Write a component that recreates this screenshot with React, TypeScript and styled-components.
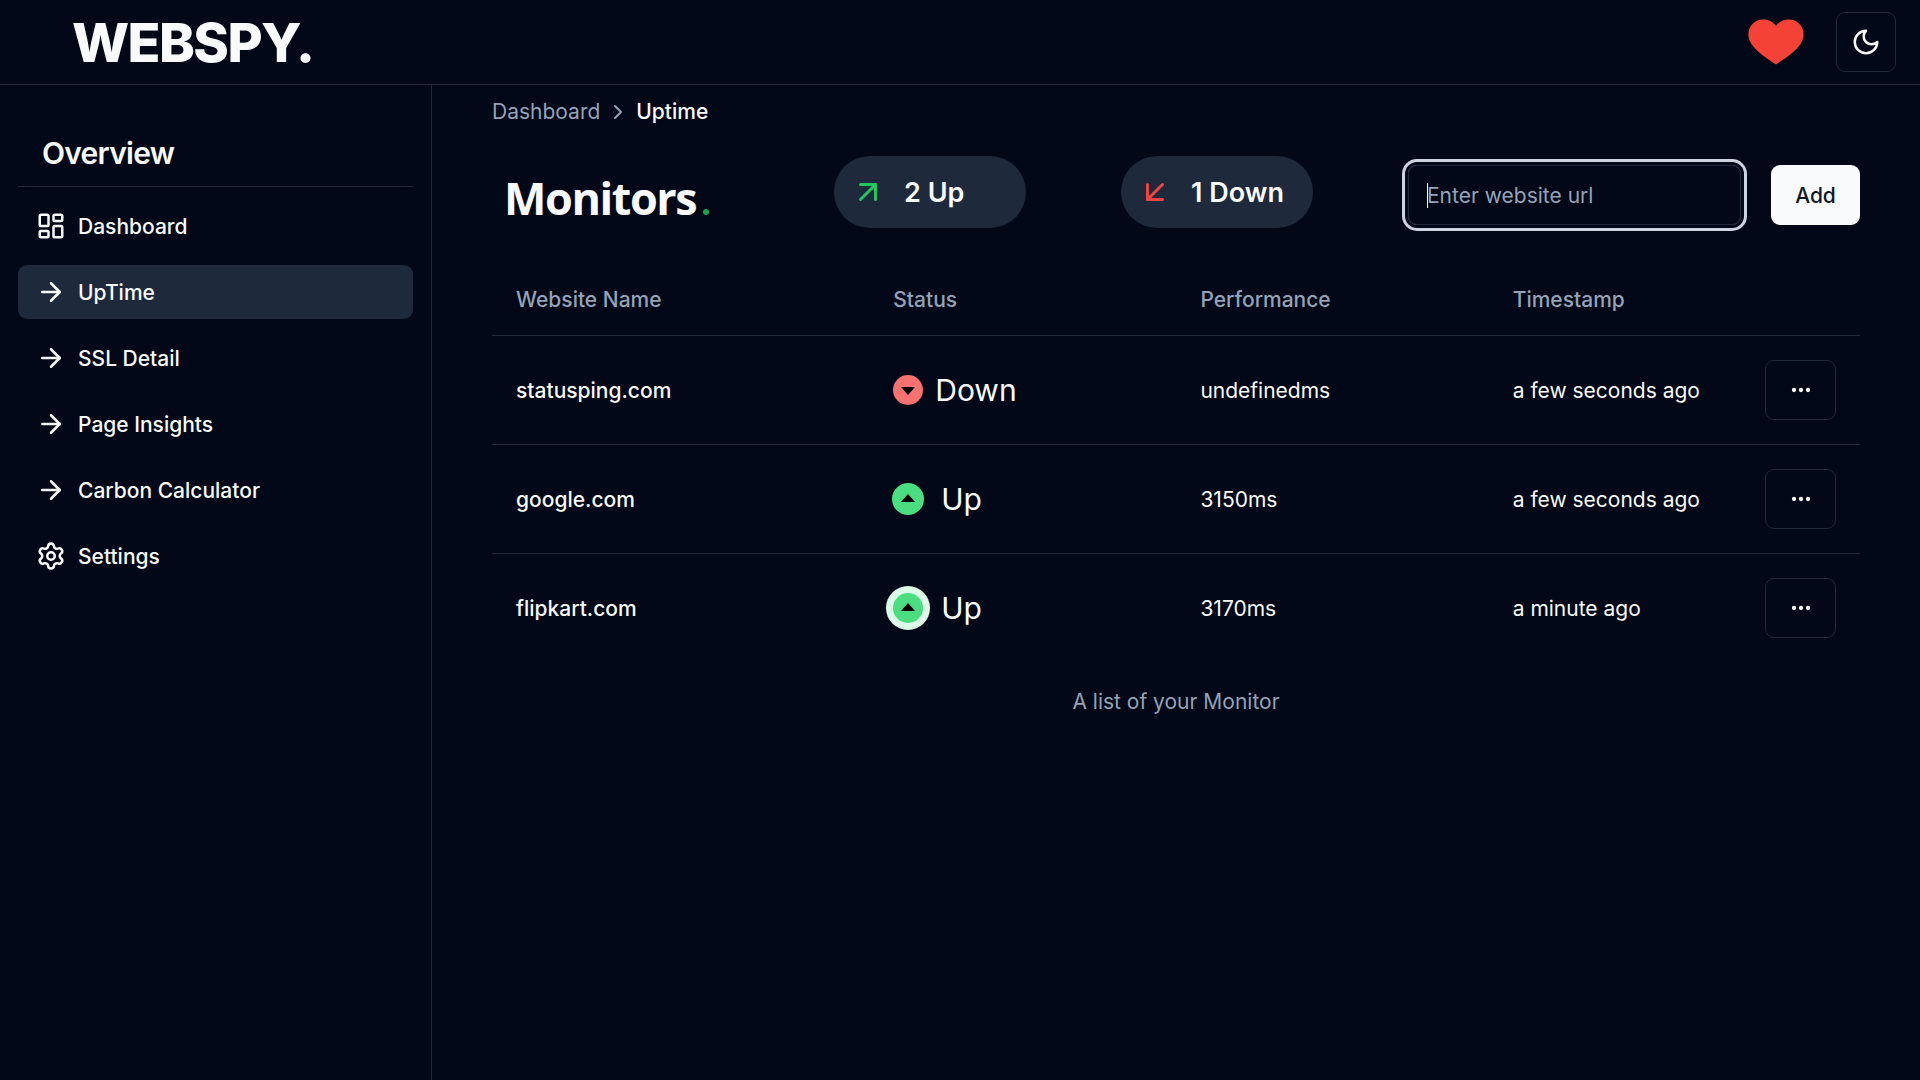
import React from "react";
import styled, { createGlobalStyle } from "styled-components";
import {
  ArrowDownLeft,
  ArrowRight,
  ArrowUpRight,
  ChevronRight,
  LayoutDashboard,
  MoreHorizontal,
  Settings,
} from "lucide-react";

const c = {
  bg: "#020817",
  fg: "#f8fafc",
  border: "#1e293b",
  muted: "#94a3b8",
};

const GlobalStyle = createGlobalStyle`
  * { box-sizing: border-box; }
  html, body { margin: 0; background: ${c.bg}; }
  body {
    color: ${c.fg};
    font-family: Inter, "Liberation Sans", sans-serif;
    font-size: 21px;
    line-height: 30px;
  }
  button { font: inherit; }
`;

const Page = styled.div`
  display: flex;
  flex-direction: column;
  height: 100vh;
  overflow: hidden;
`;

const Header = styled.header`
  display: flex;
  align-items: center;
  justify-content: space-between;
  height: 85px;
  flex: none;
  padding: 0 24px 0 72px;
  border-bottom: 1px solid ${c.border};
`;

const Logo = styled.h1`
  margin: 0;
  padding-top: 2px;
  font-size: 54px;
  line-height: 60px;
  font-weight: 800;
  letter-spacing: -1.55px;
`;

const HeaderActions = styled.div`
  display: flex;
  align-items: center;
  gap: 32px;
`;

const Heart = styled.svg`
  width: 56px;
  height: 46px;
  display: block;
`;

const IconButton = styled.button<{ $width?: number }>`
  display: flex;
  align-items: center;
  justify-content: center;
  width: ${(p) => p.$width ?? 60}px;
  height: 60px;
  padding: 0;
  border: 1px solid ${c.border};
  border-radius: 9px;
  background: transparent;
  color: ${c.fg};
`;

const Body = styled.div`
  display: flex;
  flex: 1;
  min-height: 0;
`;

const Sidebar = styled.aside`
  width: 432px;
  flex: none;
  padding: 48px 18px 0;
  border-right: 1px solid ${c.border};
`;

const SidebarTitle = styled.h2`
  margin: 0;
  padding: 0 24px 13px;
  height: 54px;
  border-bottom: 1px solid ${c.border};
  font-size: 30px;
  line-height: 40px;
  font-weight: 600;
  letter-spacing: -0.025em;
`;

const Nav = styled.nav`
  display: flex;
  flex-direction: column;
  gap: 12px;
  padding-top: 12px;
`;

const NavItem = styled.a<{ $active?: boolean }>`
  display: flex;
  align-items: center;
  gap: 12px;
  height: 54px;
  padding: 0 18px;
  border-radius: 9px;
  font-weight: 500;
  background: ${(p) => (p.$active ? c.border : "transparent")};
`;

const Label = styled.span`
  padding-top: 2px;
`;

const Main = styled.main`
  flex: 1;
  min-width: 0;
  padding: 12px 60px 0;
`;

const Breadcrumb = styled.nav`
  display: flex;
  align-items: center;
  height: 30px;
  color: ${c.muted};
  svg { margin: 0 6px; }
`;

const Current = styled.span`
  color: ${c.fg};
  font-weight: 500;
`;

const Toolbar = styled.div`
  display: flex;
  height: 72px;
  margin-top: 29px;
`;

const Title = styled.h2`
  display: flex;
  align-items: baseline;
  width: 342px;
  margin: 0;
  padding: 15px 0 0 12px;
  font-family: "Open Sans", "Noto Sans", sans-serif;
  font-size: 45px;
  line-height: 54px;
  font-weight: 700;
  letter-spacing: -1.45px;
`;

const TitleDot = styled.span`
  width: 6px;
  height: 6px;
  margin: 0 0 -2px 7px;
  border-radius: 50%;
  background: #16a34a;
`;

const Pill = styled.div<{ $tone: string }>`
  display: flex;
  align-items: center;
  gap: 18px;
  width: 192px;
  margin-right: 95px;
  padding-left: 16px;
  border-radius: 36px;
  background: ${c.border};
  font-size: 27px;
  font-weight: 600;
  svg { color: ${(p) => p.$tone}; }
`;

const Field = styled.div`
  display: flex;
  align-items: center;
  width: 333px;
  height: 60px;
  margin: 9px 30px 0 0;
  padding: 0 18px;
  border: 1px solid ${c.border};
  border-radius: 9px;
  box-shadow: 0 0 0 3px ${c.bg}, 0 0 0 6px #cbd5e1;
  color: ${c.muted};
`;

const Caret = styled.span`
  width: 1px;
  height: 25px;
  margin-right: -1px;
  background: #fff;
`;

const AddButton = styled.button`
  width: 89px;
  height: 60px;
  margin-top: 9px;
  padding: 2px 0 0;
  border: 0;
  border-radius: 9px;
  background: ${c.fg};
  color: #0f172a;
  font-weight: 500;
`;

const Table = styled.div`
  margin-top: 35px;
`;

const Row = styled.div<{ $head?: boolean }>`
  display: grid;
  grid-template-columns: 377.25px 307.15px 312.3px 1fr 95px;
  align-items: center;
  height: ${(p) => (p.$head ? 73 : 109)}px;
  border-bottom: 1px solid ${c.border};
  color: ${(p) => (p.$head ? c.muted : c.fg)};
  font-weight: ${(p) => (p.$head ? 500 : 400)};
  &:last-child { border-bottom-color: transparent; }
`;

const Cell = styled.div<{ $strong?: boolean }>`
  padding: 2px 0 0 24px;
  white-space: nowrap;
  font-weight: ${(p) => (p.$strong ? 500 : "inherit")};
`;

const Status = styled.div<{ $gap: number }>`
  display: flex;
  align-items: center;
  gap: ${(p) => p.$gap}px;
  margin-top: -2px;
  font-size: 30px;
  line-height: 42px;
`;

const StatusMark = styled.span<{ $up: boolean; $halo: number; $haloColor: string }>`
  display: flex;
  align-items: center;
  justify-content: center;
  width: 30px;
  height: 30px;
  padding: ${(p) => (p.$up ? "0 0 2px" : "2px 0 0")};
  border-radius: 50%;
  background: ${(p) => (p.$up ? "#4ade80" : "#f87171")};
  box-shadow: 0 0 0 ${(p) => p.$halo}px ${(p) => p.$haloColor};
`;

const Caption = styled.p`
  margin: 24px 0 0;
  text-align: center;
  color: ${c.muted};
`;

const navItems = [
  { label: "Dashboard", icon: LayoutDashboard },
  { label: "UpTime", icon: ArrowRight, active: true },
  { label: "SSL Detail", icon: ArrowRight },
  { label: "Page Insights", icon: ArrowRight },
  { label: "Carbon Calculator", icon: ArrowRight },
  { label: "Settings", icon: Settings },
];

const monitors = [
  { name: "statusping.com", up: false, halo: 0, haloColor: "transparent", perf: "undefinedms", time: "a few seconds ago" },
  { name: "google.com", up: true, halo: 1, haloColor: "#4ade80", perf: "3150ms", time: "a few seconds ago" },
  { name: "flipkart.com", up: true, halo: 7, haloColor: "#dcfce7", perf: "3170ms", time: "a minute ago" },
];

export default function App() {
  return (
    <Page>
      <GlobalStyle />
      <Header>
        <Logo>WEBSPY.</Logo>
        <HeaderActions>
          <Heart viewBox="0 0 56 46">
            <path
              d="M28 45.6C18 38.500 0.400 28.500 0.400 15.500C0.400 6.500 7 0.400 15 0.400C21 0.400 25.500 3 28 7C30.500 3 35 0.400 41 0.400C49 0.400 55.600 6.500 55.600 15.500C55.600 28.500 38 38.500 28 45.600Z"
              fill="#f44336"
            />
          </Heart>
          <IconButton aria-label="Toggle theme">
            <svg
              width="30"
              height="30"
              viewBox="0 0 24 24"
              fill="none"
              stroke="currentColor"
              strokeWidth="2"
              strokeLinecap="round"
              strokeLinejoin="round"
            >
              <path d="M12 3a6 6 0 0 0 9 9 9 9 0 1 1-9-9Z" />
            </svg>
          </IconButton>
        </HeaderActions>
      </Header>
      <Body>
        <Sidebar>
          <SidebarTitle>Overview</SidebarTitle>
          <Nav>
            {navItems.map(({ label, icon: Icon, active }) => (
              <NavItem key={label} $active={active}>
                <Icon size={30} />
                <Label>{label}</Label>
              </NavItem>
            ))}
          </Nav>
        </Sidebar>
        <Main>
          <Breadcrumb>
            Dashboard
            <ChevronRight size={24} />
            <Current>Uptime</Current>
          </Breadcrumb>
          <Toolbar>
            <Title>
              Monitors
              <TitleDot />
            </Title>
            <Pill $tone="#22c55e">
              <ArrowUpRight size={36} />
              <Label>2 Up</Label>
            </Pill>
            <Pill $tone="#ef4444">
              <ArrowDownLeft size={36} />
              <Label>1 Down</Label>
            </Pill>
            <Field>
              <Caret />
              <Label>Enter website url</Label>
            </Field>
            <AddButton>Add</AddButton>
          </Toolbar>
          <Table>
            <Row $head>
              <Cell>Website Name</Cell>
              <Cell>Status</Cell>
              <Cell>Performance</Cell>
              <Cell>Timestamp</Cell>
            </Row>
            {monitors.map((m) => (
              <Row key={m.name}>
                <Cell $strong>{m.name}</Cell>
                <Cell>
                  <Status $gap={m.up ? 18 : 12}>
                    <StatusMark $up={m.up} $halo={m.halo} $haloColor={m.haloColor}>
                      <svg width="14" height="8" viewBox="0 0 14 8">
                        <path d={m.up ? "M0 8L7 0L14 8Z" : "M0 0L7 8L14 0Z"} fill="#000" />
                      </svg>
                    </StatusMark>
                    {m.up ? "Up" : "Down"}
                  </Status>
                </Cell>
                <Cell>{m.perf}</Cell>
                <Cell>{m.time}</Cell>
                <IconButton $width={71} aria-label="Open menu">
                  <MoreHorizontal size={24} strokeWidth={2.3} />
                </IconButton>
              </Row>
            ))}
          </Table>
          <Caption>A list of your Monitor</Caption>
        </Main>
      </Body>
    </Page>
  );
}
